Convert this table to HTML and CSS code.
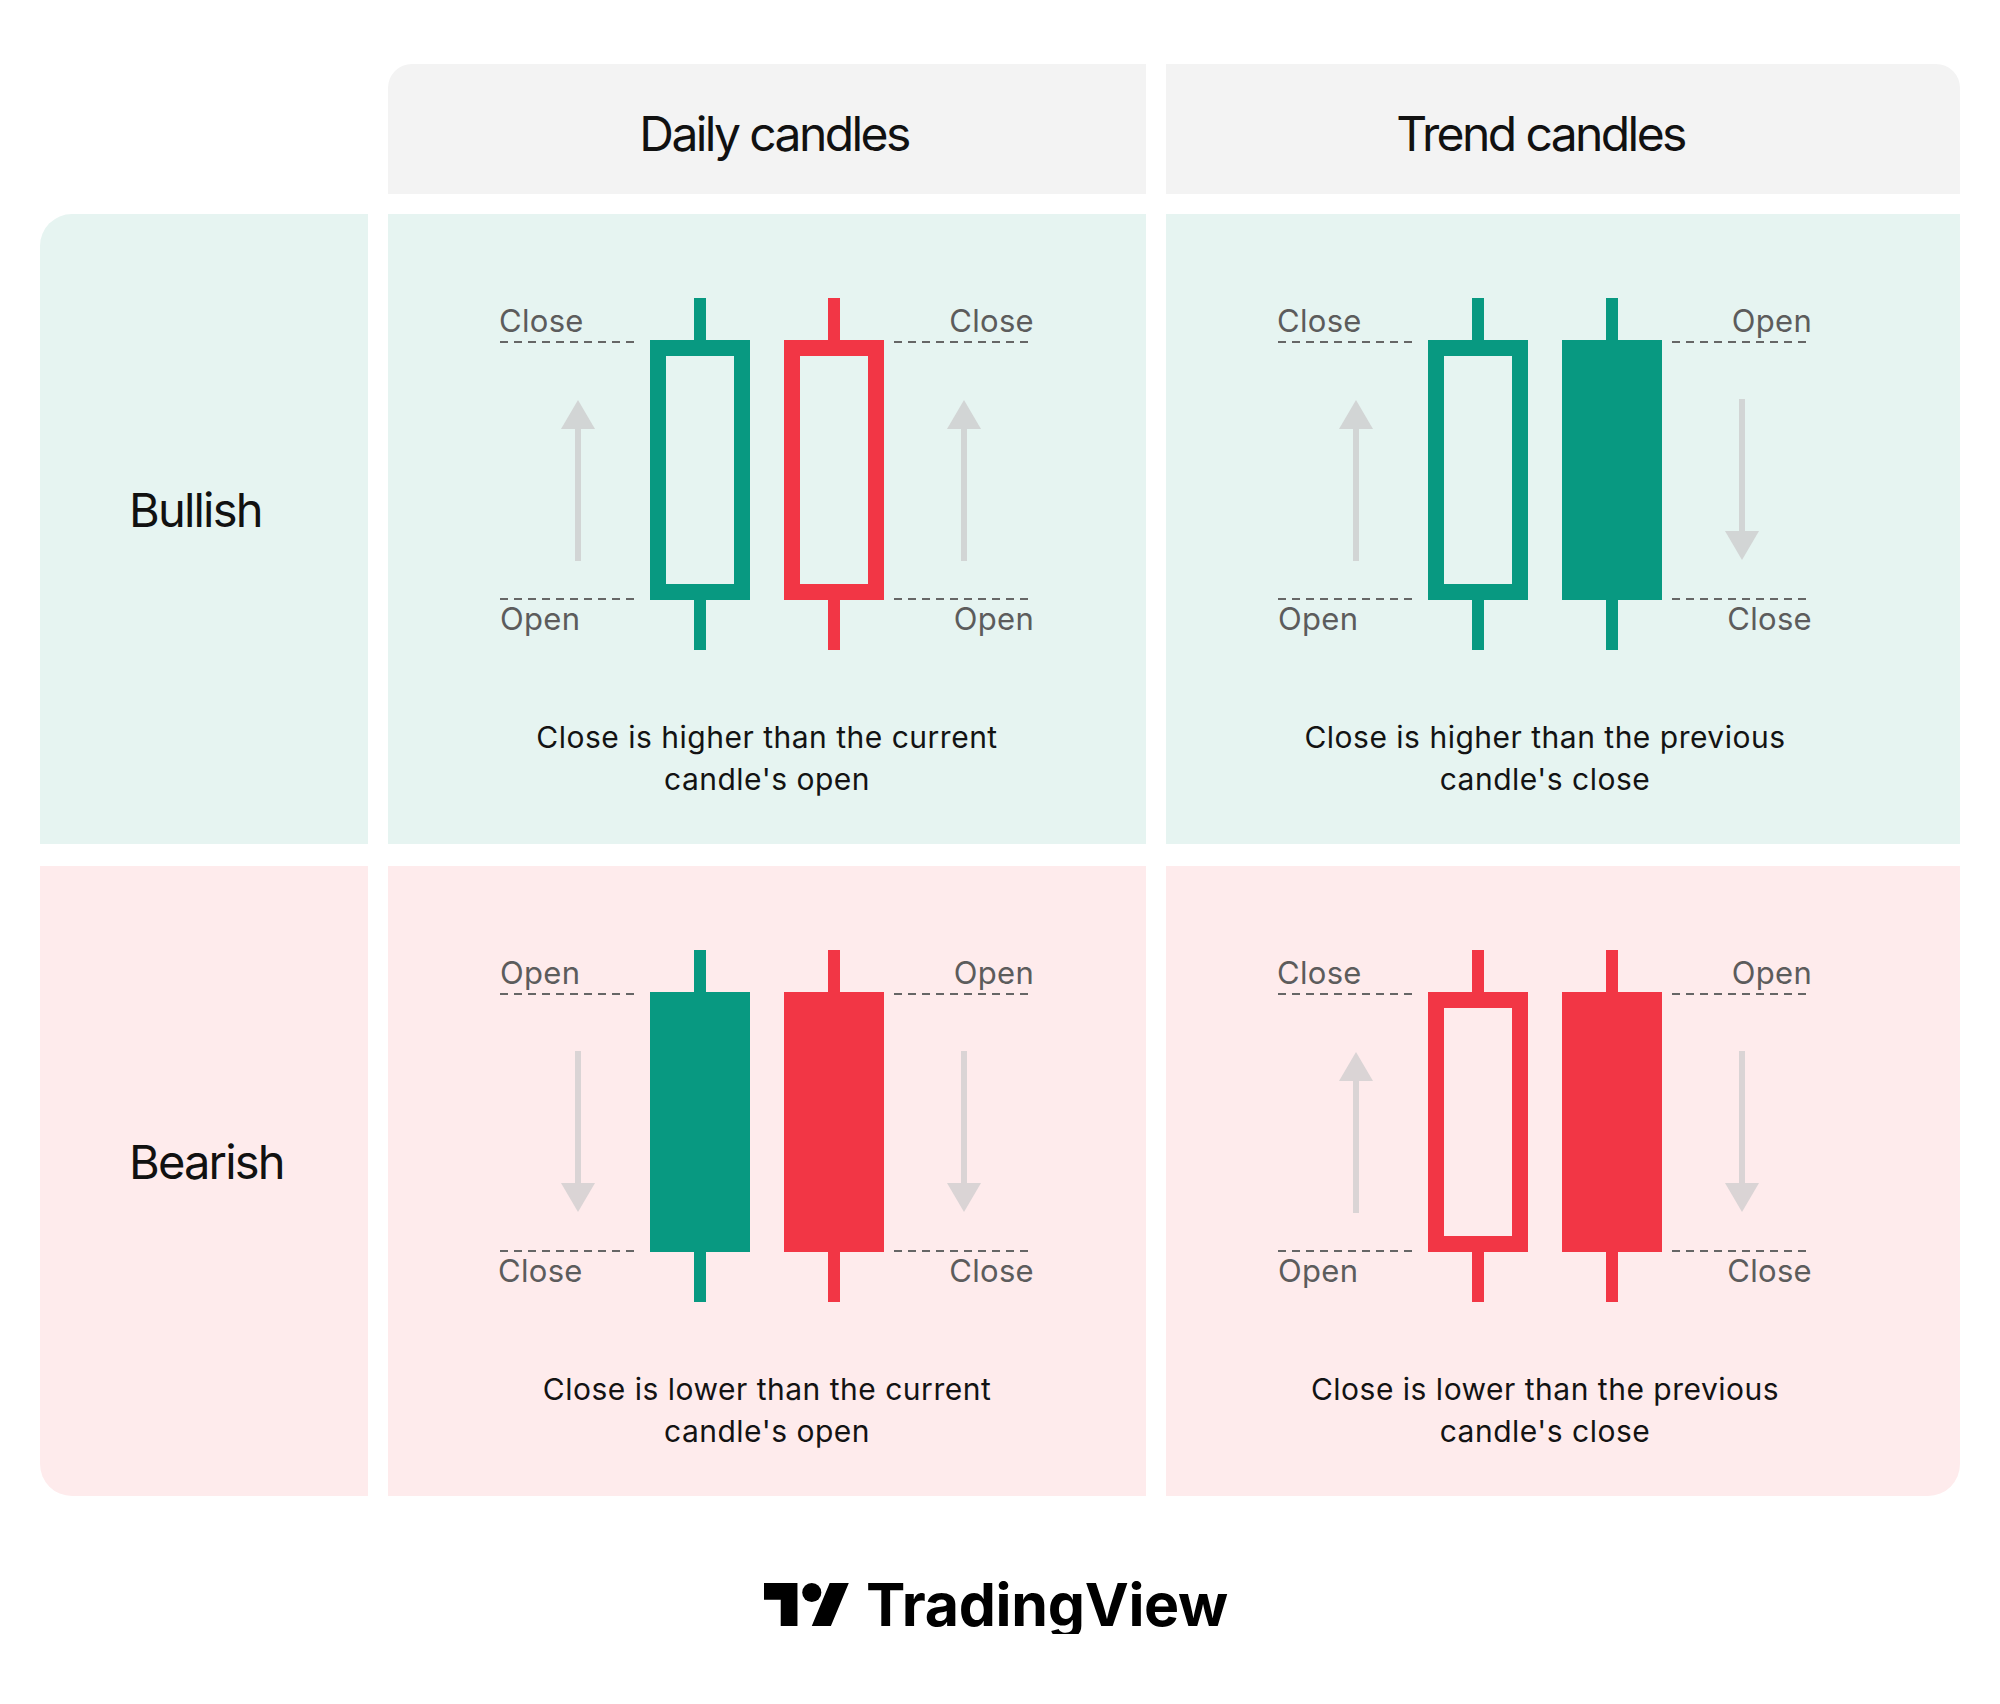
FILE: index.html
```html
<!DOCTYPE html>
<html lang="en">
<head>
<meta charset="utf-8">
<title>Daily vs Trend candles</title>
<link rel="stylesheet" href="styles.css">
</head>
<body>
<div class="page">
  <div class="grid">
    <div class="corner"></div>
    <div class="head head-daily"><span class="head-text">Daily candles</span></div>
    <div class="head head-trend"><span class="head-text">Trend candles</span></div>

    <div class="side side-bull">Bullish</div>
    <div class="panel bull">
      <div class="inner">
        <svg class="chart" viewBox="0 0 534 352" width="534" height="352">
          <line class="dash" x1="0" y1="44" x2="140" y2="44"/>
          <line class="dash" x1="394" y1="44" x2="534" y2="44"/>
          <line class="dash" x1="0" y1="301" x2="140" y2="301"/>
          <line class="dash" x1="394" y1="301" x2="534" y2="301"/>
          <text class="lbl" x="-1" y="34">Close</text>
          <text class="lbl" x="0" y="332">Open</text>
          <text class="lbl" x="534" y="34" text-anchor="end">Close</text>
          <text class="lbl" x="534" y="332" text-anchor="end">Open</text>
          <g class="arrow arrow-bull">
            <rect x="75" y="129" width="6" height="134"/><polygon points="78,102 61,131 95,131"/>
            <rect x="461" y="129" width="6" height="134"/><polygon points="464,102 447,131 481,131"/>
          </g>
          <g class="green">
            <rect class="wick" x="194" y="0" width="12" height="44"/>
            <rect class="wick" x="194" y="300" width="12" height="52"/>
            <rect class="hollow" x="158" y="50" width="84" height="244"/>
          </g>
          <g class="red">
            <rect class="wick" x="328" y="0" width="12" height="44"/>
            <rect class="wick" x="328" y="300" width="12" height="52"/>
            <rect class="hollow" x="292" y="50" width="84" height="244"/>
          </g>
        </svg>
        <p class="caption">Close is higher than the current<br>candle's open</p>
      </div>
    </div>
    <div class="panel bull panel-wide">
      <div class="inner">
        <svg class="chart" viewBox="0 0 534 352" width="534" height="352">
          <line class="dash" x1="0" y1="44" x2="140" y2="44"/>
          <line class="dash" x1="394" y1="44" x2="534" y2="44"/>
          <line class="dash" x1="0" y1="301" x2="140" y2="301"/>
          <line class="dash" x1="394" y1="301" x2="534" y2="301"/>
          <text class="lbl" x="-1" y="34">Close</text>
          <text class="lbl" x="0" y="332">Open</text>
          <text class="lbl" x="534" y="34" text-anchor="end">Open</text>
          <text class="lbl" x="534" y="332" text-anchor="end">Close</text>
          <g class="arrow arrow-bull">
            <rect x="75" y="129" width="6" height="134"/><polygon points="78,102 61,131 95,131"/>
            <rect x="461" y="101" width="6" height="134"/><polygon points="447,233 481,233 464,262"/>
          </g>
          <g class="green">
            <rect class="wick" x="194" y="0" width="12" height="44"/>
            <rect class="wick" x="194" y="300" width="12" height="52"/>
            <rect class="hollow" x="158" y="50" width="84" height="244"/>
          </g>
          <g class="green">
            <rect class="wick" x="328" y="0" width="12" height="44"/>
            <rect class="wick" x="328" y="300" width="12" height="52"/>
            <rect class="solid" x="284" y="42" width="100" height="260"/>
          </g>
        </svg>
        <p class="caption">Close is higher than the previous<br>candle's close</p>
      </div>
    </div>

    <div class="side side-bear">Bearish</div>
    <div class="panel bear">
      <div class="inner">
        <svg class="chart" viewBox="0 0 534 352" width="534" height="352">
          <line class="dash" x1="0" y1="44" x2="140" y2="44"/>
          <line class="dash" x1="394" y1="44" x2="534" y2="44"/>
          <line class="dash" x1="0" y1="301" x2="140" y2="301"/>
          <line class="dash" x1="394" y1="301" x2="534" y2="301"/>
          <text class="lbl" x="0" y="34">Open</text>
          <text class="lbl" x="-2" y="332">Close</text>
          <text class="lbl" x="534" y="34" text-anchor="end">Open</text>
          <text class="lbl" x="534" y="332" text-anchor="end">Close</text>
          <g class="arrow arrow-bear">
            <rect x="75" y="101" width="6" height="134"/><polygon points="61,233 95,233 78,262"/>
            <rect x="461" y="101" width="6" height="134"/><polygon points="447,233 481,233 464,262"/>
          </g>
          <g class="green">
            <rect class="wick" x="194" y="0" width="12" height="44"/>
            <rect class="wick" x="194" y="300" width="12" height="52"/>
            <rect class="solid" x="150" y="42" width="100" height="260"/>
          </g>
          <g class="red">
            <rect class="wick" x="328" y="0" width="12" height="44"/>
            <rect class="wick" x="328" y="300" width="12" height="52"/>
            <rect class="solid" x="284" y="42" width="100" height="260"/>
          </g>
        </svg>
        <p class="caption">Close is lower than the current<br>candle's open</p>
      </div>
    </div>
    <div class="panel bear panel-wide panel-last">
      <div class="inner">
        <svg class="chart" viewBox="0 0 534 352" width="534" height="352">
          <line class="dash" x1="0" y1="44" x2="140" y2="44"/>
          <line class="dash" x1="394" y1="44" x2="534" y2="44"/>
          <line class="dash" x1="0" y1="301" x2="140" y2="301"/>
          <line class="dash" x1="394" y1="301" x2="534" y2="301"/>
          <text class="lbl" x="-1" y="34">Close</text>
          <text class="lbl" x="0" y="332">Open</text>
          <text class="lbl" x="534" y="34" text-anchor="end">Open</text>
          <text class="lbl" x="534" y="332" text-anchor="end">Close</text>
          <g class="arrow arrow-bear">
            <rect x="75" y="129" width="6" height="134"/><polygon points="78,102 61,131 95,131"/>
            <rect x="461" y="101" width="6" height="134"/><polygon points="447,233 481,233 464,262"/>
          </g>
          <g class="red">
            <rect class="wick" x="194" y="0" width="12" height="44"/>
            <rect class="wick" x="194" y="300" width="12" height="52"/>
            <rect class="hollow" x="158" y="50" width="84" height="244"/>
          </g>
          <g class="red">
            <rect class="wick" x="328" y="0" width="12" height="44"/>
            <rect class="wick" x="328" y="300" width="12" height="52"/>
            <rect class="solid" x="284" y="42" width="100" height="260"/>
          </g>
        </svg>
        <p class="caption">Close is lower than the previous<br>candle's close</p>
      </div>
    </div>
  </div>

  <div class="logo">
    <svg class="logo-mark" viewBox="0 4 36 18" width="86" height="43" aria-hidden="true">
      <path d="M14 22H7V11H0V4h14v18zM28 22h-8l7.5-18h8L28 22z"/>
      <circle cx="20" cy="8" r="4"/>
    </svg>
    <span class="logo-text">TradingView</span>
  </div>
</div>
</body>
</html>
```

FILE: styles.css
```css
* { box-sizing: border-box; }

body {
  margin: 0;
  background: #ffffff;
  font-family: Inter, "Noto Sans", "Liberation Sans", sans-serif;
  color: #131313;
}

.page {
  width: 2000px;
  padding: 64px 40px 0;
}

.grid {
  display: grid;
  grid-template-columns: 328px 758px 794px;
  grid-template-rows: 130px 630px 632px;
  column-gap: 20px;
  row-gap: 20px;
}

.head {
  background: #f3f3f3;
  display: flex;
  align-items: center;
  padding-top: 9px;
}

.head-daily { border-top-left-radius: 24px; }
.head-trend { border-top-right-radius: 24px; }

.head-text {
  width: 758px;
  text-align: center;
  font-size: 48px;
  font-weight: 400;
  letter-spacing: -2.6px;
  color: #111111;
}

.head-daily .head-text { padding-left: 14px; }
.head-trend .head-text { padding-right: 9px; }

.side {
  display: flex;
  align-items: center;
  padding-left: 89px;
  padding-bottom: 40px;
  font-size: 47px;
  letter-spacing: -1.8px;
  color: #111111;
}

.side-bull {
  background: #e6f4f1;
  border-top-left-radius: 32px;
}

.side-bear {
  background: #feebec;
  border-bottom-left-radius: 32px;
  margin-top: 2px;
}

.panel {
  display: flex;
}

.panel.bull { background: #e6f4f1; }
.panel.bear { background: #feebec; margin-top: 2px; }
.panel-last { border-bottom-right-radius: 32px; }

.inner {
  width: 758px;
  display: flex;
  flex-direction: column;
  align-items: center;
  padding-top: 84px;
}

.chart {
  display: block;
  overflow: visible;
}

.caption {
  margin: 66px 0 0;
  font-size: 30px;
  line-height: 42px;
  text-align: center;
  color: #131313;
  letter-spacing: 0.5px;
}

.dash {
  stroke: #666666;
  stroke-width: 2;
  stroke-dasharray: 8 6;
}

.lbl {
  font-family: Inter, "Noto Sans", "Liberation Sans", sans-serif;
  font-size: 31px;
  letter-spacing: 0.3px;
  fill: #5c5c5c;
}

.arrow-bull { fill: #d2d5d5; }
.arrow-bear { fill: #dad4d5; }

.green .wick, .green .solid { fill: #089981; }
.red .wick, .red .solid { fill: #f23645; }
.green .hollow { fill: none; stroke: #089981; stroke-width: 16; }
.red .hollow { fill: none; stroke: #f23645; stroke-width: 16; }

.logo {
  margin-top: 79px;
  display: flex;
  justify-content: center;
  align-items: center;
  gap: 16px;
  padding-right: 8px;
}

.logo-mark {
  display: block;
  fill: #000000;
}

.logo-text {
  font-size: 59px;
  line-height: 59px;
  font-weight: 700;
  letter-spacing: -0.3px;
  color: #000000;
}
```
